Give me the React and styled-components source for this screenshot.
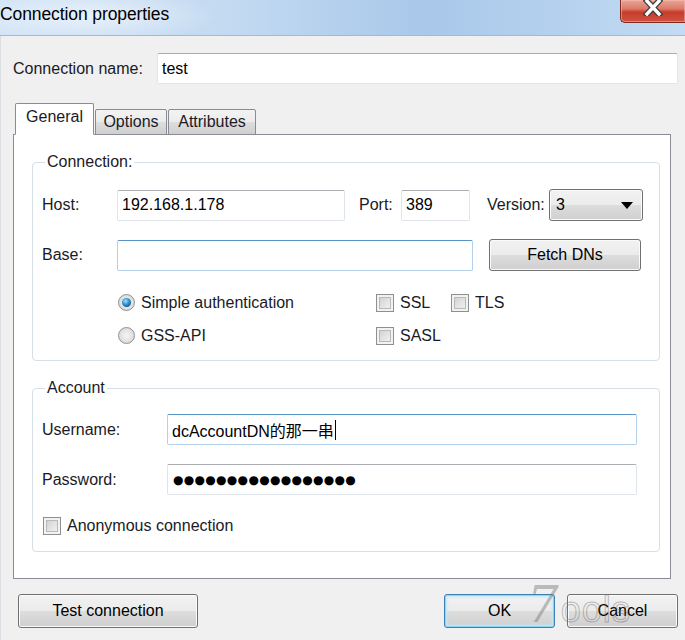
import React from "react";
import styled, { createGlobalStyle } from "styled-components";

const GlobalStyle = createGlobalStyle`
  html, body {
    margin: 0;
    padding: 0;
    background: #f0f0f0;
  }
  body {
    font-family: "Liberation Sans", Arial, "Noto Sans CJK SC", sans-serif;
    font-size: 16px;
    color: #1a1a26;
  }
`;

const Window = styled.div`
  width: 685px;
  height: 640px;
  display: flex;
  flex-direction: column;
  background: #f0f0f0;
  overflow: hidden;
`;

const TitleBar = styled.div`
  height: 35px;
  flex: none;
  display: flex;
  align-items: flex-start;
  border-bottom: 1px solid #9fbbd8;
  background:
    radial-gradient(ellipse 130px 26px at 90px 16px, rgba(255, 255, 255, 0.55), rgba(255, 255, 255, 0) 100%),
    linear-gradient(90deg, #d3e4f6 0%, #c2d9f1 35%, #a9c8ea 62%, #b4d0ee 80%, #c3dbf3 100%);
`;

const Title = styled.div`
  font-size: 17.5px;
  color: #000;
  padding: 4px 0 0 0;
  letter-spacing: -0.1px;
`;

const CloseButton = styled.div`
  margin-left: auto;
  width: 64px;
  height: 22px;
  display: flex;
  justify-content: center;
  align-items: flex-start;
  border: 1px solid #7b2b20;
  border-top: none;
  border-right: none;
  border-radius: 0 0 0 5px;
  background: linear-gradient(#e9a597 0%, #dd7a68 40%, #c73c2c 55%, #d0533f 100%);
  box-shadow: inset 0 0 0 1px rgba(255, 200, 190, 0.45);
`;

const Body = styled.div`
  flex: 1;
  display: flex;
  flex-direction: column;
  padding: 17px 7px 0 12px;
  border-left: 1px solid #dadde2;
`;

const Row = styled.div`
  display: flex;
  align-items: center;
  margin-top: ${(p) => p.$top || 0}px;
  min-height: ${(p) => (p.$h ? `${p.$h}px` : "auto")};
`;

const Label = styled.div`
  width: ${(p) => (p.$w ? `${p.$w}px` : "auto")};
  flex: none;
  white-space: nowrap;
  margin-left: ${(p) => p.$ml || 0}px;
`;

const Field = styled.div`
  box-sizing: border-box;
  width: ${(p) => (p.$w ? `${p.$w}px` : "auto")};
  flex: ${(p) => (p.$w ? "none" : "1")};
  height: 31px;
  display: flex;
  align-items: center;
  padding-left: 4px;
  background: #fff;
  border: 1px solid ${(p) => (p.$focus ? "#b3d0ea" : "#e0e5ec")};
  border-top-color: ${(p) => (p.$focus ? "#5b93c7" : "#abadb3")};
  border-radius: 2px;
  color: #000;
  white-space: nowrap;
  font-family: "Liberation Sans", Arial, "Noto Sans CJK SC", sans-serif;
`;

const Caret = styled.span`
  display: inline-block;
  width: 1px;
  height: 20px;
  background: #000;
  margin-left: 1px;
`;

const Dots = styled.span`
  font-family: "DejaVu Sans", sans-serif;
  font-size: 12px;
  letter-spacing: 0.3px;
  padding-left: 1px;
`;

const TabArea = styled.div`
  margin-top: 19px;
  margin-right: 7px;
  display: flex;
  flex-direction: column;
`;

const TabStrip = styled.div`
  display: flex;
  align-items: flex-end;
  padding-left: 2px;
  margin-bottom: -1px;
  position: relative;
  z-index: 1;
`;

const Tab = styled.div`
  box-sizing: border-box;
  width: ${(p) => p.$w}px;
  height: ${(p) => (p.$active ? 32 : 26)}px;
  margin-left: ${(p) => (p.$active ? 0 : 1)}px;
  display: flex;
  align-items: center;
  justify-content: center;
  padding-bottom: ${(p) => (p.$active ? 4 : 0)}px;
  border: 1px solid #898c95;
  border-bottom: ${(p) => (p.$active ? "1px solid #fff" : "1px solid #898c95")};
  border-radius: 2px 2px 0 0;
  background: ${(p) =>
    p.$active
      ? "#fff"
      : "linear-gradient(#f3f3f3 0%, #ebebeb 50%, #dedede 51%, #cfcfcf 100%)"};
`;

const TabPanel = styled.div`
  background: #fff;
  border: 1px solid #898c95;
  padding: 18px 10px 26px 18px;
  display: flex;
  flex-direction: column;
`;

const Group = styled.fieldset`
  margin: ${(p) => p.$top || 0}px 0 0 0;
  padding: ${(p) => p.$pt}px 10px ${(p) => p.$pb}px 9px;
  border: 1px solid #d5dfe5;
  border-radius: 4px;
  min-inline-size: 0;
`;

const Legend = styled.legend`
  margin-left: 3px;
  padding: 0 2px;
  line-height: 18px;
  font-size: 16px;
`;

const Button = styled.div`
  box-sizing: border-box;
  width: ${(p) => p.$w}px;
  height: ${(p) => p.$h || 34}px;
  flex: none;
  display: flex;
  align-items: center;
  justify-content: center;
  margin-left: ${(p) => p.$ml || 0}px;
  border: 1px solid ${(p) => (p.$default ? "#3c7fb1" : "#707070")};
  border-radius: 3px;
  background: linear-gradient(#f2f2f2 0%, #ebebeb 50%, #dddddd 51%, #cfcfcf 100%);
  box-shadow: ${(p) =>
    p.$default
      ? "inset 0 0 0 1px #8fd6f5, inset 0 0 3px 2px #bde9fb"
      : "inset 0 0 0 1px #fbfbfb"};
  color: #000;
`;

const Select = styled(Button)`
  justify-content: space-between;
  padding: 0 9px 0 6px;
  height: 32px;
`;

const OptionsGrid = styled.div`
  margin-top: 15px;
  padding-left: 76px;
  display: grid;
  grid-template-columns: 258px 75px 100px;
  grid-auto-rows: 33px;
  align-items: center;
`;

const Choice = styled.div`
  display: flex;
  align-items: center;
  gap: 6px;
  white-space: nowrap;
`;

const Radio = styled.span`
  width: 17px;
  height: 17px;
  box-sizing: border-box;
  border-radius: 50%;
  border: 1px solid #8f9193;
  background: radial-gradient(circle at 50% 50%, #f6f6f6 0%, #dcdcdc 70%, #cfcfcf 100%);
  display: flex;
  align-items: center;
  justify-content: center;
  flex: none;
  &::after {
    content: "";
    width: 9px;
    height: 9px;
    border-radius: 50%;
    display: ${(p) => (p.$checked ? "block" : "none")};
    background: radial-gradient(circle at 40% 35%, #a6e4fb 0%, #3ea2dc 35%, #14578f 75%, #0d3d66 100%);
  }
`;

const Check = styled.span`
  width: 18px;
  height: 18px;
  box-sizing: border-box;
  flex: none;
  margin-left: ${(p) => p.$ml || 0}px;
  border: 1px solid #8e8f8f;
  background: linear-gradient(135deg, #c9c9c9 0%, #e2e2e2 50%, #f7f7f7 100%);
  box-shadow: inset 0 0 0 2px #f2f2f2, inset 0 0 0 3px #b9b9b9;
`;

const ButtonBar = styled.div`
  position: relative;
  display: flex;
  align-items: center;
  margin-top: 15px;
  padding: 0 8px 0 5px;
`;

const Watermark = styled.div`
  position: absolute;
  left: 514px;
  top: -14px;
  display: flex;
  align-items: baseline;
  pointer-events: none;
  font-family: "DejaVu Serif", serif;
  font-style: italic;
  color: rgba(120, 120, 120, 0.45);
  font-size: 50px;
  line-height: 1;
`;

const Hollow = styled.span`
  font-family: "Liberation Sans", sans-serif;
  font-style: normal;
  font-size: 36px;
  color: transparent;
  -webkit-text-stroke: 1px rgba(110, 110, 110, 0.45);
  margin-left: 2px;
  letter-spacing: 1px;
`;

export default function App() {
  return (
    <>
      <GlobalStyle />
      <Window>
        <TitleBar>
          <Title>Connection properties</Title>
          <CloseButton>
            <svg width="22" height="16" viewBox="0 0 22 16">
              <path d="M5 1 L17 14 M17 1 L5 14" stroke="#3d3d3d" strokeWidth="6" strokeLinecap="square" />
              <path d="M5 1 L17 14 M17 1 L5 14" stroke="#fff" strokeWidth="3.4" strokeLinecap="square" />
            </svg>
          </CloseButton>
        </TitleBar>

        <Body>
          <Row>
            <Label $w={144}>Connection name:</Label>
            <Field>test</Field>
          </Row>

          <TabArea>
            <TabStrip>
              <Tab $active $w={79}>General</Tab>
              <Tab $w={72}>Options</Tab>
              <Tab $w={88}>Attributes</Tab>
            </TabStrip>
            <TabPanel>
              <Group $pt={18} $pb={8}>
                <Legend>Connection:</Legend>
                <Row>
                  <Label $w={75}>Host:</Label>
                  <Field $w={228}>192.168.1.178</Field>
                  <Label $w={42} $ml={14}>Port:</Label>
                  <Field $w={69}>389</Field>
                  <Label $w={62} $ml={17}>Version:</Label>
                  <Select $w={94}>
                    <span>3</span>
                    <svg width="12" height="7" viewBox="0 0 12 7">
                      <path d="M0 0 H12 L6 7 Z" fill="#000" />
                    </svg>
                  </Select>
                </Row>
                <Row $top={18}>
                  <Label $w={75}>Base:</Label>
                  <Field $w={356} $focus />
                  <Button $w={152} $h={32} $ml={16}>Fetch DNs</Button>
                </Row>
                <OptionsGrid>
                  <Choice>
                    <Radio $checked />
                    Simple authentication
                  </Choice>
                  <Choice>
                    <Check />
                    SSL
                  </Choice>
                  <Choice>
                    <Check />
                    TLS
                  </Choice>
                  <Choice>
                    <Radio />
                    GSS-API
                  </Choice>
                  <Choice>
                    <Check />
                    SASL
                  </Choice>
                </OptionsGrid>
              </Group>

              <Group $top={18} $pt={17} $pb={9}>
                <Legend>Account</Legend>
                <Row>
                  <Label $w={125}>Username:</Label>
                  <Field $w={470} $focus>
                    dcAccountDN的那一串
                    <Caret />
                  </Field>
                </Row>
                <Row $top={19}>
                  <Label $w={125}>Password:</Label>
                  <Field $w={470}>
                    <Dots>●●●●●●●●●●●●●●●●●</Dots>
                  </Field>
                </Row>
                <Row $top={14} $h={33}>
                  <Choice>
                    <Check $ml={1} />
                    Anonymous connection
                  </Choice>
                </Row>
              </Group>
            </TabPanel>
          </TabArea>

          <ButtonBar>
            <Button $w={180}>Test connection</Button>
            <Button $w={111} $ml={246} $default>OK</Button>
            <Button $w={111} $ml={12}>Cancel</Button>
            <Watermark>
              7<Hollow>ools</Hollow>
            </Watermark>
          </ButtonBar>
        </Body>
      </Window>
    </>
  );
}
